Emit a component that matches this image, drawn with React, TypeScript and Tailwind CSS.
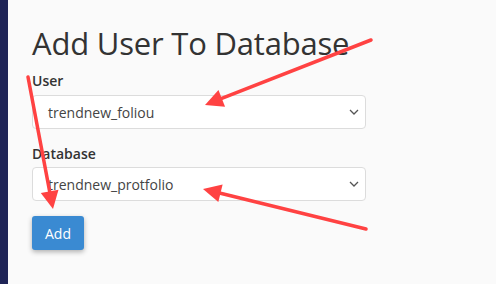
import React from "react";

const Chevron = () => (
  <svg width="10" height="6" viewBox="0 0 10 6" className="absolute right-[6px] top-1/2 -translate-y-1/2">
    <path d="M1 1l4 4 4-4" fill="none" stroke="#555" strokeWidth="1.3" />
  </svg>
);

const SelectBox = ({ value }: { value: string }) => (
  <div className="relative w-[334px] h-[34px] bg-white border border-[#dcdcdc] rounded-[4px] flex items-center pl-[15px] text-[14px] text-[#444]">
    {value}
    <Chevron />
  </div>
);

const Arrow = ({ x1, y1, x2, y2 }: { x1: number; y1: number; x2: number; y2: number }) => {
  const a = Math.atan2(y2 - y1, x2 - x1);
  const len = 18;
  const w = 9;
  const bx = x2 - len * Math.cos(a);
  const by = y2 - len * Math.sin(a);
  const px = -Math.sin(a) * w;
  const py = Math.cos(a) * w;
  return (
    <g>
      <line x1={x1} y1={y1} x2={bx} y2={by} stroke="#ff4242" strokeWidth="3.5" strokeLinecap="round" />
      <polygon points={`${x2},${y2} ${bx + px},${by + py} ${bx - px},${by - py}`} fill="#ff4242" />
    </g>
  );
};

export default function App() {
  return (
    <div className="relative w-[496px] h-[284px] flex bg-[#fafafa] overflow-hidden" style={{ fontFamily: '"Open Sans", sans-serif' }}>
      <div className="w-[8px] h-full bg-[#1f2456]" />
      <div className="pl-[24px] pt-[23px]">
        <h1 className="text-[31px] leading-[40px] text-[#333] tracking-[-0.2px]">Add User To Database</h1>
        <div className="mt-[8px] text-[14px] font-semibold text-[#333] leading-[20px]">User</div>
        <div className="mt-[4px]">
          <SelectBox value="trendnew_foliou" />
        </div>
        <div className="mt-[15px] text-[14px] font-semibold text-[#333] leading-[20px]">Database</div>
        <div className="mt-[3px]">
          <SelectBox value="trendnew_protfolio" />
        </div>
        <button className="mt-[15px] w-[52px] h-[34px] bg-[#3a8ad2] text-white text-[14px] rounded-[3px] shadow-[0_2px_5px_rgba(0,0,0,0.3)]">
          Add
        </button>
      </div>
      <svg className="absolute inset-0 pointer-events-none" width="496" height="284">
        <Arrow x1={371} y1={40} x2={205} y2={105} />
        <Arrow x1={28} y1={77} x2={53} y2={209} />
        <Arrow x1={366} y1={229} x2={203} y2={189} />
      </svg>
    </div>
  );
}
